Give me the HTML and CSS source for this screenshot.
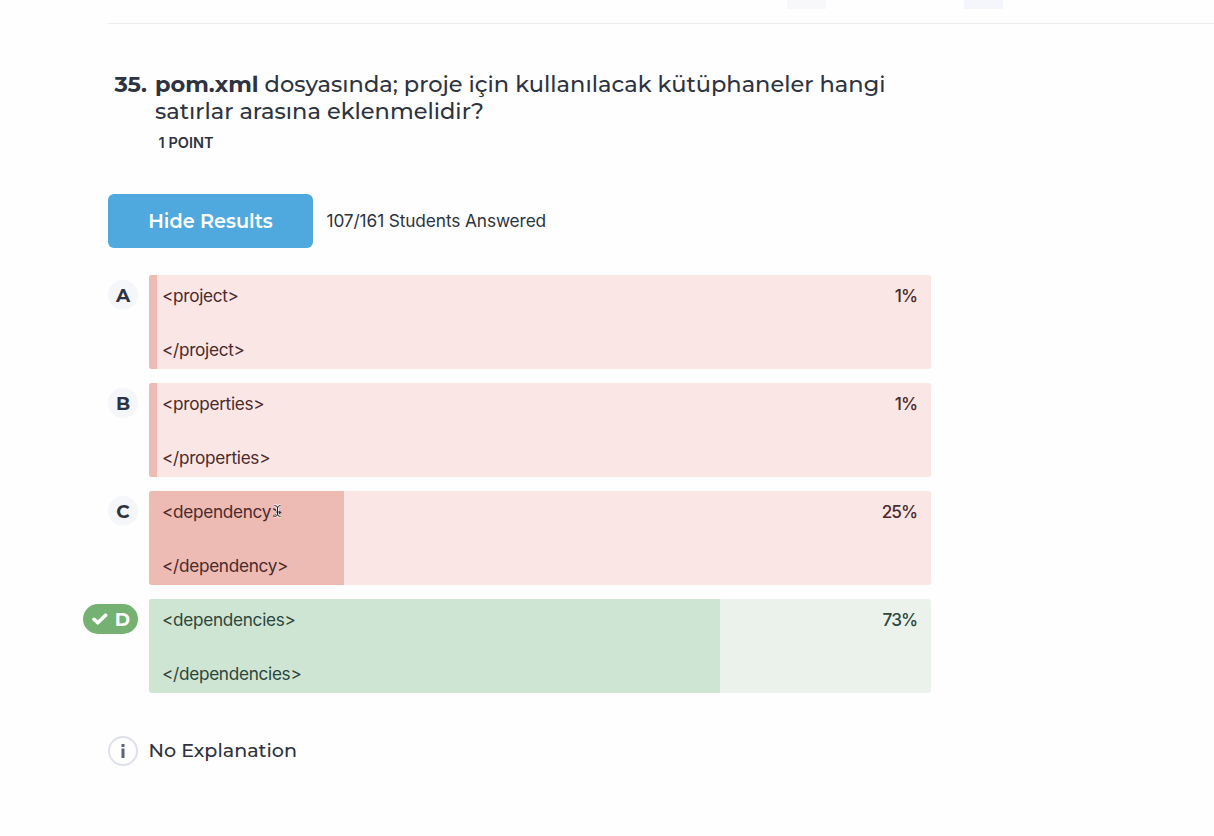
FILE: index.html
```html
<!DOCTYPE html>
<html lang="tr">
<head>
<meta charset="utf-8">
<title>Quiz Results</title>
<link rel="stylesheet" href="styles.css">
</head>
<body>
<header class="topbar"><span class="tab-edge"></span><span class="tab-edge tab-edge-blue"></span></header>
<main class="quiz">
  <section class="question">
    <span class="number">35.</span>
    <div class="prompt">
      <h1 class="title"><span class="line first"><b class="file">pom.xml</b> <span class="rest">dosyasında; proje için kullanılacak kütüphaneler hangi</span></span><span class="line second">satırlar arasına eklenmelidir?</span></h1>
      <p class="points">1 POINT</p>
    </div>
  </section>
  <div class="actions">
    <button class="toggle"><span>Hide Results</span></button>
    <span class="answered">107/161 Students Answered</span>
  </div>
  <ul class="answers">
    <li class="answer">
      <div class="marker"><span class="letter">A</span></div>
      <div class="bar"><div class="fill" style="width:1%"></div><div class="code"><span>&lt;project&gt;</span><span>&lt;/project&gt;</span></div><span class="percent">1%</span></div>
    </li>
    <li class="answer">
      <div class="marker"><span class="letter">B</span></div>
      <div class="bar"><div class="fill" style="width:1%"></div><div class="code"><span>&lt;properties&gt;</span><span>&lt;/properties&gt;</span></div><span class="percent">1%</span></div>
    </li>
    <li class="answer">
      <div class="marker"><span class="letter">C</span></div>
      <div class="bar"><div class="fill" style="width:25%"></div><div class="code"><span>&lt;dependency&gt;</span><span>&lt;/dependency&gt;</span></div><span class="percent">25%</span>
        <svg class="cursor" width="9" height="14" viewBox="0 0 9 14" fill="none"><path d="M1.5 1.5Q4.5 1.5 4.5 4V10Q4.5 12.5 1.5 12.5M7.5 1.5Q4.5 1.5 4.5 4M7.5 12.5Q4.5 12.5 4.5 10M3 8H6" stroke="#fff" stroke-width="2.4"/><path d="M1.5 1.5Q4.5 1.5 4.5 4V10Q4.5 12.5 1.5 12.5M7.5 1.5Q4.5 1.5 4.5 4M7.5 12.5Q4.5 12.5 4.5 10M3 8H6" stroke="#222"/></svg>
      </div>
    </li>
    <li class="answer correct">
      <div class="marker"><span class="letter"><svg width="18" height="14" viewBox="0 0 18 14" fill="none"><path d="M3 6.3L6.8 9.8L14.6 2.2" stroke="#fff" stroke-width="3.6" stroke-linecap="round" stroke-linejoin="round"/></svg>D</span></div>
      <div class="bar"><div class="fill" style="width:73%"></div><div class="code"><span>&lt;dependencies&gt;</span><span>&lt;/dependencies&gt;</span></div><span class="percent">73%</span></div>
    </li>
  </ul>
  <footer class="explanation">
    <svg width="30" height="30" viewBox="0 0 30 30" fill="none"><circle cx="15" cy="15" r="14" stroke="#dfe1e8" stroke-width="2"/><path d="M15 12.5V22" stroke="#5a6474" stroke-width="3"/><path d="M15 8V11" stroke="#5a6474" stroke-width="3"/></svg>
    <span class="note">No Explanation</span>
  </footer>
</main>
</body>
</html>
```

FILE: styles.css
```css
* { box-sizing: border-box; }
body { margin: 0; height: 836px; overflow: hidden; background: #fefefe; color: #2d3340; font-family: Inter, "Liberation Sans", sans-serif; }
.topbar { display: flex; align-items: flex-start; gap: 138px; height: 24px; margin-left: 108px; padding-left: 679px; border-bottom: 1px solid #ececee; }
.tab-edge { width: 39px; height: 9px; background: #f8f8fa; }
.tab-edge-blue { background: #f5f5fc; }
.quiz { width: 823px; margin-left: 108px; }
.question { display: flex; height: 170px; padding: 46.5px 0 0 6px; font-family: Montserrat, Inter, sans-serif; font-size: 22.5px; line-height: 27px; }
.number { flex: none; width: 41px; padding-left: .5px; font-weight: 700; }
.prompt { flex: 1; }
.title { margin: 0; font-size: inherit; font-weight: 500; }
.line { display: block; white-space: nowrap; }
.file { font-weight: 700; }
.points { margin: 9.5px 0 0 3.5px; font: 600 14.5px/18px Inter, sans-serif; letter-spacing: .05px; }
.actions { display: flex; align-items: center; gap: 13.5px; height: 54px; }
.toggle { width: 205px; height: 54px; border: 0; border-radius: 6px; background: #50a9de; color: #fff; font: 600 19.3px/27px Montserrat, Inter, sans-serif; }
.answered { padding-bottom: 1px; font-size: 17.3px; letter-spacing: -.12px; }
.answers { display: grid; gap: 14px; margin: 27px 0 0; padding: 0; list-style: none; }
.answer { display: flex; height: 94px; }
.marker { display: flex; flex: none; justify-content: flex-end; width: 30px; height: 30px; margin: 5px 10.5px 0 0; }
.letter { display: flex; flex: none; align-items: center; justify-content: center; width: 30px; height: 30px; padding-top: 1px; border-radius: 15px; background: #f4f6f9; font: 700 18.5px/29px Montserrat, Inter, sans-serif; }
.correct .letter { gap: 6px; width: 55px; background: #74b173; color: #fff; }
.bar { position: relative; display: flex; flex: 1; justify-content: space-between; padding: 7px 14px 6px 13.5px; border-radius: 3px; overflow: hidden; background: #fae6e4; color: #4a2b2d; font-size: 17.2px; line-height: 27px; }
.fill { position: absolute; inset: 0 auto 0 0; min-width: 8px; background: #eebab4; }
.code { position: relative; display: flex; flex-direction: column; gap: 27px; letter-spacing: -.3px; }
.percent { position: relative; font-size: 17.2px; font-weight: 500; letter-spacing: -1px; }
.cursor { position: absolute; left: 124px; top: 13px; }
.correct .bar { background: #ebf2eb; color: #2c463b; }
.correct .fill { background: #cfe5d4; }
.explanation { display: flex; align-items: center; gap: 10.5px; margin-top: 43px; font: 500 19.1px/30px Montserrat, Inter, sans-serif; }
```
